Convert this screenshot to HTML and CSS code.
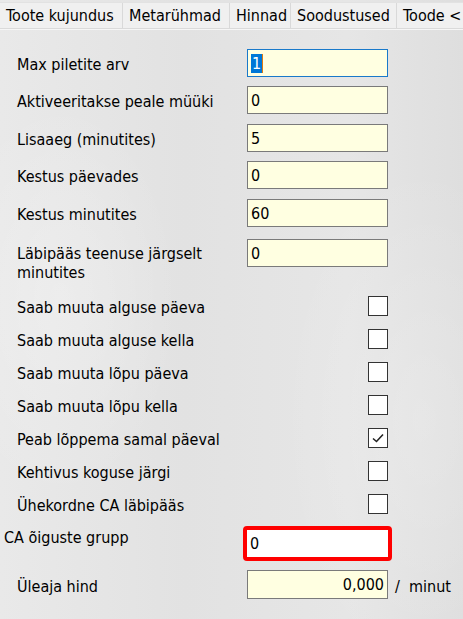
FILE: index.html
```html
<!DOCTYPE html>
<html lang="et">
<head>
<meta charset="utf-8">
<title>Toode</title>
<link rel="stylesheet" href="styles.css">
</head>
<body>
<div class="tabs">
  <div class="tab">Toote kujundus</div>
  <div class="tab">Metarühmad</div>
  <div class="tab">Hinnad</div>
  <div class="tab">Soodustused</div>
  <div class="tab last">Toode &lt;</div>
</div>
<div class="form">
  <div class="row r1"><span class="label">Max piletite arv</span><span class="field focus"><span class="sel">1</span><span class="caret"></span></span></div>
  <div class="row r2"><span class="label">Aktiveeritakse peale müüki</span><span class="field">0</span></div>
  <div class="row r3"><span class="label">Lisaaeg (minutites)</span><span class="field">5</span></div>
  <div class="row r4"><span class="label">Kestus päevades</span><span class="field">0</span></div>
  <div class="row r5"><span class="label">Kestus minutites</span><span class="field">60</span></div>
  <div class="row r6 tall"><span class="label wrap">Läbipääs teenuse järgselt minutites</span><span class="field">0</span></div>
  <div class="crow c1"><span class="label">Saab muuta alguse päeva</span><span class="check"></span></div>
  <div class="crow"><span class="label">Saab muuta alguse kella</span><span class="check"></span></div>
  <div class="crow"><span class="label">Saab muuta lõpu päeva</span><span class="check"></span></div>
  <div class="crow"><span class="label">Saab muuta lõpu kella</span><span class="check"></span></div>
  <div class="crow"><span class="label">Peab lõppema samal päeval</span><span class="check on"><svg width="14" height="12" viewBox="0 0 14 12"><path d="M2 6.5 L5.5 9.5 L12 2.5" fill="none" stroke="#222" stroke-width="1.6"/></svg></span></div>
  <div class="crow"><span class="label">Kehtivus koguse järgi</span><span class="check"></span></div>
  <div class="crow c7"><span class="label">Ühekordne CA läbipääs</span><span class="check"></span></div>
  <div class="row ca"><span class="label outdent">CA õiguste grupp</span><span class="redbox"><span class="field white">0</span></span></div>
  <div class="row over"><span class="label">Üleaja hind</span><span class="field right">0,000</span><span class="unit">/&nbsp; minut</span></div>
</div>
</body>
</html>
```
FILE: styles.css
```css
html, body {
  margin: 0;
  padding: 0;
}
body {
  width: 463px;
  height: 619px;
  overflow: hidden;
  font-family: "DejaVu Sans Condensed", "DejaVu Sans", sans-serif;
  font-size: 16px;
  color: #000;
  background: #e4e4e4;
  background-image:
    radial-gradient(ellipse 120px 200px at 60px 300px, rgba(255,255,255,0.25), transparent),
    radial-gradient(ellipse 140px 260px at 420px 420px, rgba(255,255,255,0.2), transparent),
    linear-gradient(90deg, #e9e9e9 0, #e2e2e2 40%, #e6e6e6 75%, #dedede 100%);
}
.tabs {
  display: flex;
  height: 25px;
  margin-top: 2px;
  border-top: 1px solid #e2e2e2;
  border-bottom: 1px solid #dadada;
  background: #f0f0f0;
  box-shadow: 0 1px 0 #f6f6f6;
}
.tab {
  padding: 0 0 0 6px;
  line-height: 26px;
  border-right: 1px solid #d9d9d9;
  white-space: nowrap;
  overflow: hidden;
}
.tab:first-child { width: 116px; }
.tab:nth-child(2) { width: 100px; }
.tab:nth-child(3) { width: 54px; }
.tab:nth-child(4) { width: 99px; }
.tab.last { border-right: none; flex: 1; }

.form {
  padding-top: 20px;
}
.row {
  display: flex;
  align-items: center;
  height: 28px;
}
.r1, .r3 { margin-bottom: 9px; }
.r2, .r4 { margin-bottom: 10px; }
.r5 { margin-bottom: 12px; }
.label {
  width: 230px;
  padding-left: 17px;
  padding-top: 3px;
  flex: none;
  white-space: nowrap;
}
.tall {
  align-items: flex-start;
  height: 43px;
  margin-bottom: 14px;
}
.label.wrap {
  white-space: normal;
  line-height: 19px;
  padding-top: 5px;
  width: 210px;
  padding-right: 20px;
}
.field {
  box-sizing: border-box;
  width: 141px;
  height: 28px;
  border: 1px solid #7a7a7a;
  background: #ffffe1;
  padding-left: 3px;
  padding-top: 1px;
  line-height: 26px;
  display: flex;
  align-items: center;
}
.field.focus {
  border-color: #1979ca;
}
.sel {
  background: #0078d7;
  color: #fff;
  line-height: 19px;
  padding: 0 1px;
}
.caret {
  width: 1px;
  height: 19px;
  background: #e07a10;
}
.crow {
  display: flex;
  align-items: center;
  height: 20px;
  margin-bottom: 13px;
}
.crow .label {
  width: 351px;
  padding-top: 2px;
}
.c7 { margin-bottom: 12px; }
.check {
  box-sizing: border-box;
  width: 20px;
  height: 20px;
  border: 1px solid #333;
  background: #fff;
  display: flex;
  align-items: center;
  justify-content: center;
}
.ca {
  align-items: flex-start;
  height: 35px;
  margin-bottom: 9px;
}
.label.outdent {
  padding-left: 4px;
  width: 239px;
  line-height: 19px;
  padding-top: 2px;
}
.redbox {
  border: 4px solid #ff0000;
  border-radius: 4px;
  display: flex;
}
.field.white {
  background: #fff;
  border: none;
  width: 141px;
  height: 27px;
}
.over {
  height: 29px;
}
.field.right {
  justify-content: flex-end;
  padding-right: 3px;
  height: 29px;
}
.unit {
  padding-left: 7px;
  padding-top: 3px;
  white-space: nowrap;
}
```
